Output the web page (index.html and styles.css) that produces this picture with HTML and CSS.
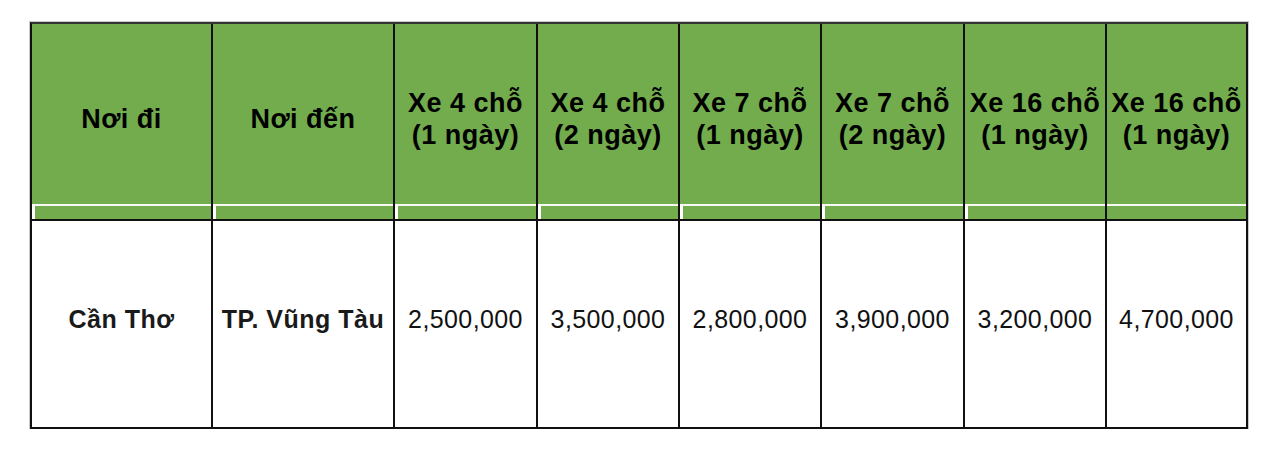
FILE: index.html
```html
<!DOCTYPE html>
<html lang="vi">
<head>
<meta charset="utf-8">
<title>Bảng giá thuê xe</title>
<link rel="stylesheet" href="styles.css">
</head>
<body>
<div class="price-table">
  <div class="cell head"><div class="head-main">Nơi đi</div><div class="head-band"></div></div>
  <div class="cell head"><div class="head-main">Nơi đến</div><div class="head-band"></div></div>
  <div class="cell head"><div class="head-main">Xe 4 chỗ<br>(1 ngày)</div><div class="head-band"></div></div>
  <div class="cell head"><div class="head-main">Xe 4 chỗ<br>(2 ngày)</div><div class="head-band"></div></div>
  <div class="cell head"><div class="head-main">Xe 7 chỗ<br>(1 ngày)</div><div class="head-band"></div></div>
  <div class="cell head"><div class="head-main">Xe 7 chỗ<br>(2 ngày)</div><div class="head-band"></div></div>
  <div class="cell head"><div class="head-main">Xe 16 chỗ<br>(1 ngày)</div><div class="head-band"></div></div>
  <div class="cell head last"><div class="head-main">Xe 16 chỗ<br>(1 ngày)</div><div class="head-band"></div></div>

  <div class="cell body strong">Cần Thơ</div>
  <div class="cell body strong">TP. Vũng Tàu</div>
  <div class="cell body">2,500,000</div>
  <div class="cell body">3,500,000</div>
  <div class="cell body">2,800,000</div>
  <div class="cell body">3,900,000</div>
  <div class="cell body">3,200,000</div>
  <div class="cell body">4,700,000</div>
</div>
</body>
</html>
```

FILE: styles.css
```css
html, body {
  margin: 0;
  padding: 0;
  background: #fff;
}

body {
  padding: 22px 0 0 30px;
  font-family: "Liberation Sans", Arial, sans-serif;
}

.price-table {
  display: grid;
  grid-template-columns: 181px 182px 143px 142px 142px 143px 142px 141px;
  width: max-content;
  border-left: 2px solid #111;
  border-top: 2px solid #333;
  box-shadow: 0 0 0 1px #c8c8c8;
}

.cell {
  box-sizing: border-box;
  border-right: 2px solid #111;
  border-bottom: 2px solid #111;
}

.head {
  height: 197px;
  background: #72ac4d;
  display: flex;
  flex-direction: column;
}

.head-main {
  flex: 1;
  display: flex;
  align-items: center;
  justify-content: center;
  text-align: center;
  padding-top: 10px;
  font-weight: bold;
  font-size: 27px;
  letter-spacing: 0.5px;
  line-height: 32px;
  color: #000;
  white-space: nowrap;
}

.head-band {
  border-top: 2px solid #f6f9f3;
  border-left: 3px solid #ffffff;
  box-sizing: content-box;
  height: 13px;
}

.head.last .head-band {
  border-left: none;
}

.body {
  height: 208px;
  display: flex;
  align-items: center;
  justify-content: center;
  padding-bottom: 10px;
  font-size: 25px;
  letter-spacing: 0.4px;
  color: #111;
  white-space: nowrap;
}

.body.strong {
  font-weight: bold;
  letter-spacing: 0.5px;
  color: #1a1a1a;
}
```
